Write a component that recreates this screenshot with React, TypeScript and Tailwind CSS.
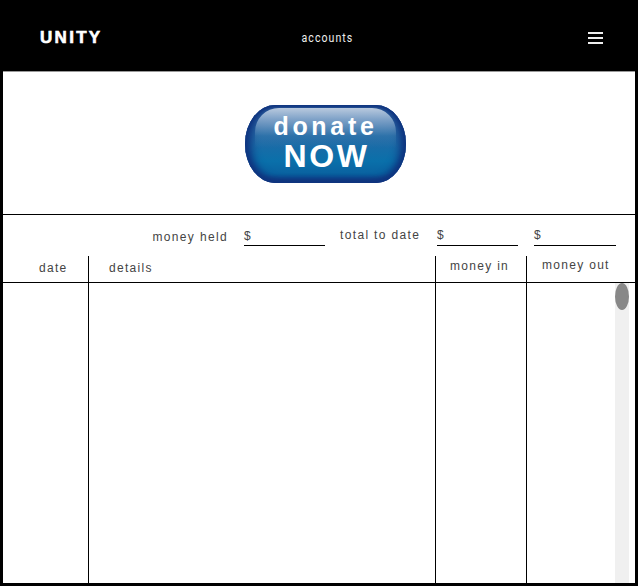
const sans = "font-['Liberation_Sans',Arial,sans-serif]";

function Amount({ className }: { className: string }) {
  return (
    <div className={`h-[31px] border-b border-black text-[12px] leading-[14px] tracking-[1px] text-[#444] ${className}`}>
      $
    </div>
  );
}

function DonateButton() {
  return (
    <div className="relative h-[78px] w-[161px] overflow-hidden rounded-[30px/39px] bg-[linear-gradient(180deg,#3f6da6_0%,#1f6aa6_45%,#0a70aa_72%,#0a62a0_88%,#123a80_100%)] shadow-[inset_6px_0_8px_#0f3580,inset_-6px_0_8px_#0f3580,inset_0_-3px_5px_#12337a,inset_0_2px_2px_#1c3f85]">
      <div className="absolute left-[10px] right-[10px] top-[3px] h-[40px] rounded-t-[24px] bg-[linear-gradient(180deg,#b9c9de_0%,#7fa2c8_28%,rgba(60,125,175,0.4)_70%,rgba(40,110,165,0)_100%)]" />
      <div className={`relative flex flex-col items-center text-white ${sans}`}>
        <div className="mt-[6px] text-[25px] leading-[30px] font-bold tracking-[3.7px]">donate</div>
        <div className="-mt-[3px] ml-[2px] text-[32px] leading-[36px] font-bold tracking-[2.6px]">NOW</div>
      </div>
    </div>
  );
}

export default function App() {
  return (
    <div className={`h-[586px] w-[638px] overflow-hidden border-x-[3px] border-b-[3px] border-black bg-white antialiased ${sans}`}>
      {/* header */}
      <div className="flex h-[72px] items-center justify-between border-b border-[#999] bg-black pt-[4px] pl-[37px] pr-[32px]">
        <div className="w-[132px] text-[17px] leading-5 font-bold tracking-[2.3px] text-white [-webkit-text-stroke:0.6px_white]">UNITY</div>
        <div className="origin-center scale-x-[0.88] font-['Roboto',sans-serif] text-[12px] leading-4 tracking-[1.2px] text-[#eee]">accounts</div>
        <div className="flex w-[120px] justify-end">
          <svg width="15" height="12" viewBox="0 0 15 12" fill="#eee">
            <rect x="0" y="0" width="15" height="2" />
            <rect x="0" y="5" width="15" height="2" />
            <rect x="0" y="10" width="15" height="2" />
          </svg>
        </div>
      </div>

      {/* donate */}
      <div className="flex h-[143px] justify-center border-b border-black pt-[33px] pl-[13px]">
        <DonateButton />
      </div>

      {/* totals */}
      <div className="flex h-[41px] items-start text-[12px] tracking-[1.35px] text-[#444]">
        <div className="w-[225px] pt-[15px] text-right leading-[14px]">money held</div>
        <Amount className="ml-[16px] w-[81px] pt-[14px]" />
        <div className="ml-[15px] w-[81px] pt-[13px] leading-[14px] whitespace-nowrap">total to date</div>
        <Amount className="ml-[16px] w-[81px] pt-[13px]" />
        <Amount className="ml-[16px] w-[82px] pt-[13px]" />
      </div>

      {/* table */}
      <div className="relative flex h-[327px] text-[12px] leading-[14px] tracking-[1.3px] text-[#444]">
        <div className="w-[86px] border-r border-black">
          <div className="h-[27px] border-b border-black pt-[5px] pl-[36px]">date</div>
        </div>
        <div className="w-[347px] border-r border-black">
          <div className="h-[27px] border-b border-black pt-[5px] pl-[20px]">details</div>
        </div>
        <div className="w-[91px] border-r border-black">
          <div className="h-[27px] border-b border-black pt-[3px] pl-[14px]">money in</div>
        </div>
        <div className="flex-1">
          <div className="h-[27px] border-b border-black pt-[2px] pl-[15px]">money out</div>
        </div>
        {/* scrollbar */}
        <div className="absolute left-[612px] top-[27px] bottom-0 w-[14px] bg-[#f0f0f0]">
          <div className="h-[27px] w-[14px] rounded-[50%] bg-[#888]" />
        </div>
      </div>
    </div>
  );
}
